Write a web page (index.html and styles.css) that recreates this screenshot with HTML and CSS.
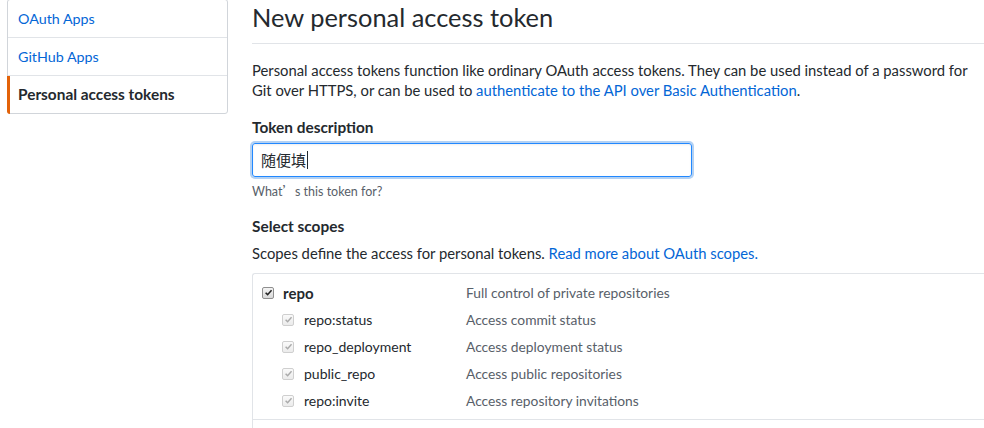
FILE: index.html
```html
<!DOCTYPE html>
<html lang="en">
<head>
<meta charset="utf-8">
<title>New personal access token</title>
<link rel="stylesheet" href="styles.css">
</head>
<body>
<div class="page">
  <nav class="menu">
    <a class="menu-item" href="#">OAuth Apps</a>
    <a class="menu-item" href="#">GitHub Apps</a>
    <a class="menu-item selected" href="#">Personal access tokens</a>
  </nav>
  <main class="main">
    <div class="subhead">
      <h2 class="subhead-heading">New personal access token</h2>
    </div>
    <p class="intro">Personal access tokens function like ordinary OAuth access tokens. They can be used instead of a password for Git over HTTPS, or can be used to <a href="#">authenticate to the API over Basic Authentication</a>.</p>
    <div class="form-group">
      <label class="label">Token description</label>
      <div class="input"><span class="input-text">随便填</span><span class="caret"></span></div>
      <p class="note">What<span class="cjk">’</span>s this token for?</p>
    </div>
    <div class="form-group scopes-group">
      <label class="label">Select scopes</label>
      <p class="scopes-note">Scopes define the access for personal tokens. <a href="#">Read more about OAuth scopes.</a></p>
      <div class="scopes">
        <ul class="scope-list">
          <li class="scope-row parent">
            <span class="scope-name"><span class="check"><svg viewBox="0 0 10 10" width="9" height="9"><path d="M1.8 5.2 L4 7.4 L8.4 2.4" fill="none" stroke="#222" stroke-width="1.7"/></svg></span>repo</span>
            <span class="scope-desc">Full control of private repositories</span>
          </li>
          <li class="scope-row child">
            <span class="scope-name"><span class="check disabled"><svg viewBox="0 0 10 10" width="9" height="9"><path d="M1.8 5.2 L4 7.4 L8.4 2.4" fill="none" stroke="#aaa" stroke-width="1.6"/></svg></span>repo:status</span>
            <span class="scope-desc">Access commit status</span>
          </li>
          <li class="scope-row child">
            <span class="scope-name"><span class="check disabled"><svg viewBox="0 0 10 10" width="9" height="9"><path d="M1.8 5.2 L4 7.4 L8.4 2.4" fill="none" stroke="#aaa" stroke-width="1.6"/></svg></span>repo_deployment</span>
            <span class="scope-desc">Access deployment status</span>
          </li>
          <li class="scope-row child">
            <span class="scope-name"><span class="check disabled"><svg viewBox="0 0 10 10" width="9" height="9"><path d="M1.8 5.2 L4 7.4 L8.4 2.4" fill="none" stroke="#aaa" stroke-width="1.6"/></svg></span>public_repo</span>
            <span class="scope-desc">Access public repositories</span>
          </li>
          <li class="scope-row child">
            <span class="scope-name"><span class="check disabled"><svg viewBox="0 0 10 10" width="9" height="9"><path d="M1.8 5.2 L4 7.4 L8.4 2.4" fill="none" stroke="#aaa" stroke-width="1.6"/></svg></span>repo:invite</span>
            <span class="scope-desc">Access repository invitations</span>
          </li>
        </ul>
        <div class="scope-next"></div>
      </div>
    </div>
  </main>
</div>
</body>
</html>
```
FILE: styles.css
```css
html, body {
  margin: 0;
  padding: 0;
  background: #fff;
  overflow: hidden;
}
body {
  font-family: Lato, "Noto Sans CJK SC", sans-serif;
  font-size: 14px;
  line-height: 20px;
  color: #24292e;
  height: 428px;
}
a {
  color: #0366d6;
  text-decoration: none;
}
.page {
  display: flex;
  align-items: flex-start;
  gap: 24px;
  margin-top: -1px;
  padding-left: 7px;
  width: 1200px;
}
.menu {
  width: 219px;
  flex: none;
  border: 1px solid #d1d5da;
  border-radius: 3px;
  display: flex;
  flex-direction: column;
}
.menu-item {
  position: relative;
  display: block;
  padding: 8px 10px 8px 10px;
  line-height: 21px;
  font-size: 14.3px;
  border-bottom: 1px solid #e1e4e8;
}
.menu-item:last-child {
  border-bottom: none;
}
.menu-item.selected {
  color: #24292e;
  font-weight: 700;
  font-size: 15.4px;
}
.menu-item.selected::before {
  content: "";
  position: absolute;
  left: -1px;
  top: 0;
  bottom: -1px;
  width: 3px;
  background: #e36209;
  border-bottom-left-radius: 3px;
}
.main {
  width: 900px;
  flex: none;
}
.subhead {
  border-bottom: 1px solid #e1e4e8;
  padding-top: 1px;
  padding-bottom: 9px;
}
.subhead-heading {
  margin: 0;
  font-size: 25.4px;
  font-weight: 400;
  line-height: 34px;
}
.intro {
  margin: 16px 0 17px;
  font-size: 14.8px;
  width: 730px;
}
.form-group {
  margin: 0;
}
.label {
  display: block;
  font-weight: 700;
  font-size: 15.4px;
  margin-bottom: 6px;
}
.input {
  display: flex;
  align-items: center;
  width: 422px;
  height: 32px;
  padding: 0 8px;
  border: 1px solid #2188ff;
  border-radius: 3px;
  box-shadow: inset 0 1px 2px rgba(27,31,35,0.075), 0 0 0 2px rgba(3,102,214,0.3);
  font-size: 15px;
}
.input-text {
  font-family: "Noto Sans CJK SC", sans-serif;
  color: #24292e;
}
.caret {
  display: inline-block;
  width: 1px;
  height: 18px;
  background: #24292e;
  margin-left: 1px;
}
.note {
  margin: 5px 0 15px;
  font-size: 12.5px;
  line-height: 18px;
  color: #586069;
}
.cjk {
  font-family: "Noto Sans CJK SC", sans-serif;
}
.scopes-group .label {
  margin-bottom: 7px;
}
.scopes-note {
  margin: 0 0 10px;
  font-size: 14.8px;
}
.scopes {
  border: 1px solid #e1e4e8;
  border-right: none;
  border-bottom: none;
  border-radius: 3px 0 0 0;
}
.scope-list {
  list-style: none;
  margin: 0;
  padding: 5px 0 5px;
}
.scope-row {
  display: flex;
  align-items: center;
  height: 27px;
  font-size: 14px;
}
.scope-name {
  box-sizing: border-box;
  display: flex;
  align-items: center;
  width: 213px;
  flex: none;
}
.parent .scope-name {
  padding-left: 9px;
  font-weight: 700;
  font-size: 15px;
}
.child .scope-name {
  padding-left: 29px;
}
.scope-desc {
  color: #586069;
  font-size: 13.8px;
}
.check {
  display: inline-flex;
  align-items: center;
  justify-content: center;
  width: 10px;
  height: 10px;
  border: 1px solid #8f8f8f;
  border-radius: 2px;
  background: linear-gradient(#f4f4f4, #d8d8d8);
  margin-right: 9px;
}
.check.disabled {
  border-color: #cfcfcf;
  background: linear-gradient(#fafafa, #ebebeb);
  margin-right: 10px;
}
.scope-next {
  border-top: 1px solid #e1e4e8;
  height: 8px;
}
```
